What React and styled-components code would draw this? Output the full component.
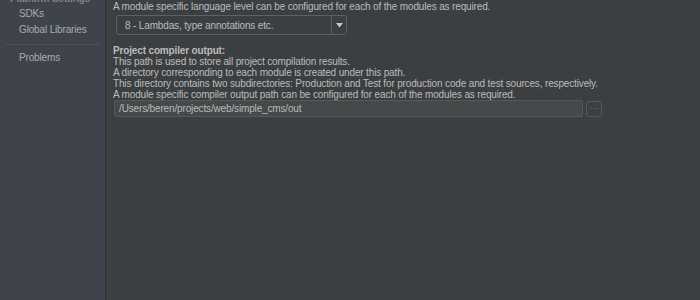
import React from 'react';
import styled, { createGlobalStyle } from 'styled-components';

const Global = createGlobalStyle`
  html, body {
    margin: 0;
    padding: 0;
    background: #3c3f41;
  }
  body {
    font-family: 'Liberation Sans', Arial, sans-serif;
    font-size: 10px;
    letter-spacing: -0.15px;
    color: #bbbbbb;
  }
`

const Frame = styled.div`
  display: flex;
  width: 700px;
  height: 300px;
  overflow: hidden;
`

const Sidebar = styled.div`
  width: 105px;
  flex-shrink: 0;
  background-color: #3e434c;
  border-right: 1px solid #2f3236;
  display: flex;
  flex-direction: column;
  margin-top: -8px;
`

const GroupTitle = styled.div`
  padding-left: 10px;
  height: 14px;
  line-height: 14px;
  font-weight: bold;
  color: #7f8287;
`

const NavItem = styled.div`
  padding-left: 19px;
  height: 16px;
  line-height: 16px;
  color: #a9abae;
`

const Separator = styled.div`
  height: 1px;
  background: #4c5058;
  margin: 6px 5px 5px 5px;
`

const Main = styled.div`
  flex: 1;
  padding: 1px 0 0 7px;
  display: flex;
  flex-direction: column;
`

const Line = styled.div`
  height: 11px;
  line-height: 11px;
  white-space: nowrap;
  color: #bbbbbb;
`

const Combo = styled.div`
  margin: 3px 0 0 3px;
  width: 229px;
  height: 18px;
  border: 1px solid #5e6163;
  border-radius: 3px;
  display: flex;
  align-items: center;
  box-sizing: content-box;
`

const ComboText = styled.div`
  flex: 1;
  padding-left: 8px;
  color: #bbbbbb;
`

const ComboArrow = styled.div`
  width: 14px;
  height: 18px;
  border-left: 1px solid #5e6163;
  display: flex;
  align-items: center;
  justify-content: center;
`

const Heading = styled.div`
  margin-top: 10px;
  height: 11px;
  line-height: 11px;
  font-weight: bold;
  color: #bbbbbb;
`

const PathRow = styled.div`
  display: flex;
  align-items: center;
  gap: 3px;
  margin: 0 0 0 1px;
`

const PathInput = styled.div`
  width: 463px;
  height: 15px;
  line-height: 15px;
  background: #45494a;
  border: 1px solid #55595b;
  border-radius: 2px;
  padding-left: 4px;
  color: #bbbbbb;
`

const BrowseButton = styled.div`
  width: 14px;
  height: 14px;
  border: 1px solid #55595b;
  border-radius: 3px;
  display: flex;
  align-items: center;
  justify-content: center;
  font-size: 7px;
  color: #a0a0a0;
  letter-spacing: 0.5px;
`

export default function App() {
  return (
    <Frame>
      <Global />
      <Sidebar>
        <GroupTitle>Platform Settings</GroupTitle>
        <NavItem>SDKs</NavItem>
        <NavItem>Global Libraries</NavItem>
        <Separator />
        <NavItem>Problems</NavItem>
      </Sidebar>
      <Main>
        <Line>A module specific language level can be configured for each of the modules as required.</Line>
        <Combo>
          <ComboText>8 - Lambdas, type annotations etc.</ComboText>
          <ComboArrow>
            <svg width="7" height="5" viewBox="0 0 7 5">
              <path d="M0 0 H7 L3.5 4.5 Z" fill="#c8c8c8" />
            </svg>
          </ComboArrow>
        </Combo>
        <Heading>Project compiler output:</Heading>
        <Line>This path is used to store all project compilation results.</Line>
        <Line>A directory corresponding to each module is created under this path.</Line>
        <Line>This directory contains two subdirectories: Production and Test for production code and test sources, respectively.</Line>
        <Line>A module specific compiler output path can be configured for each of the modules as required.</Line>
        <PathRow>
          <PathInput>/Users/beren/projects/web/simple_cms/out</PathInput>
          <BrowseButton>···</BrowseButton>
        </PathRow>
      </Main>
    </Frame>
  );
}
